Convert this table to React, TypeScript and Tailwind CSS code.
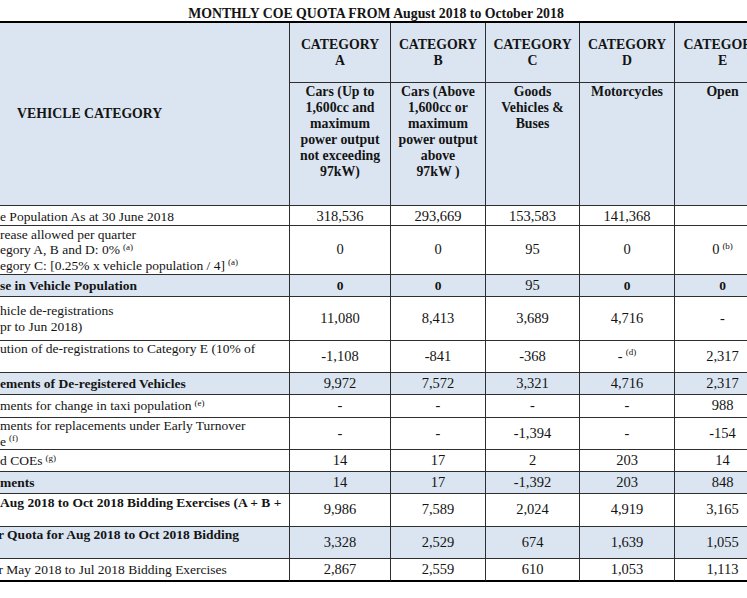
type Val = string | { v: string; sup?: string; b?: boolean }

type Row = {
  h: string
  label: React.ReactNode[]
  values: Val[]
  blue?: boolean
  bold?: boolean
  valueBold?: boolean
  nudge?: string
}

function Sup({ children }: { children: React.ReactNode }) {
  return <sup className="ml-[3px] text-[9px]">{children}</sup>
}

// heights include the 1px bottom rule of each row
const rows: Row[] = [
  {
    h: "h-[20px]",
    label: ["e Population As at 30 June 2018"],
    values: ["318,536", "293,669", "153,583", "141,368", ""],
  },
  {
    h: "h-[49px]",
    label: [
      "rease allowed per quarter",
      <>egory A, B and D: 0%<Sup>(a)</Sup></>,
      <>egory C: [0.25% x vehicle population / 4]<Sup>(a)</Sup></>,
    ],
    values: ["0", "0", "95", "0", { v: "0", sup: "(b)" }],
  },
  {
    h: "h-[22px]",
    label: ["se in Vehicle Population"],
    values: ["0", "0", { v: "95", b: false }, "0", "0"],
    blue: true,
    bold: true,
    valueBold: true,
  },
  {
    h: "h-[44px]",
    label: ["hicle de-registrations", "pr to Jun 2018)"],
    values: ["11,080", "8,413", "3,689", "4,716", "-"],
  },
  {
    h: "h-[32px]",
    label: ["ution of de-registrations to Category E (10% of", "\u00a0"],
    values: ["-1,108", "-841", "-368", { v: "-", sup: "(d)" }, "2,317"],
  },
  {
    h: "h-[22px]",
    label: ["ements of De-registered Vehicles"],
    values: ["9,972", "7,572", "3,321", "4,716", "2,317"],
    blue: true,
    bold: true,
  },
  {
    h: "h-[23px]",
    label: [<>ments for change in taxi population<Sup>(e)</Sup></>],
    values: ["-", "-", "-", "-", "988"],
  },
  {
    h: "h-[32px]",
    label: ["ments for replacements under Early Turnover", <>e<Sup>(f)</Sup></>],
    values: ["-", "-", "-1,394", "-", "-154"],
  },
  {
    h: "h-[22px]",
    label: [<>d COEs<Sup>(g)</Sup></>],
    values: ["14", "17", "2", "203", "14"],
  },
  {
    h: "h-[22px]",
    label: ["ments"],
    values: ["14", "17", "-1,392", "203", "848"],
    blue: true,
    bold: true,
  },
  {
    h: "h-[33px]",
    label: ["Aug 2018 to Oct 2018 Bidding Exercises (A + B +", "\u00a0"],
    values: ["9,986", "7,589", "2,024", "4,919", "3,165"],
    bold: true,
  },
  {
    h: "h-[32px]",
    label: ["r Quota for Aug 2018 to Oct 2018 Bidding", "\u00a0"],
    values: ["3,328", "2,529", "674", "1,639", "1,055"],
    blue: true,
    bold: true,
    nudge: "-ml-[2px]",
  },
  {
    h: "h-[23px] border-b-2 border-b-black",
    label: ["r May 2018 to Jul 2018 Bidding Exercises"],
    values: ["2,867", "2,559", "610", "1,053", "1,113"],
    nudge: "-ml-[1.5px]",
  },
]

const categories = [
  { code: "A", col: "col-start-2", desc: ["Cars (Up to", "1,600cc and", "maximum", "power output", "not exceeding", "97kW)"] },
  { code: "B", col: "col-start-3", desc: ["Cars (Above", "1,600cc or", "maximum", "power output", "above", "97kW )"] },
  { code: "C", col: "col-start-4", desc: ["Goods", "Vehicles &", "Buses"] },
  { code: "D", col: "col-start-5", desc: ["Motorcycles"] },
  { code: "E", col: "col-start-6", desc: ["Open"] },
]

const cols = "grid grid-cols-[290px_101px_95px_94px_95px_96px]"
const rule = "border-[#2e2e2e]"

export default function App() {
  return (
    <div
      className="w-[747px] h-[598px] overflow-hidden bg-white text-[#141414]"
      style={{ fontFamily: '"Liberation Serif", "Times New Roman", serif' }}
    >
      <h1 className="h-[21px] pt-[7px] pl-[5px] text-center text-[13.8px] leading-[14px] font-bold whitespace-nowrap">
        MONTHLY COE QUOTA FROM August 2018 to October 2018
      </h1>

      <div role="table" className="w-[771px] border-t-2 border-black">
        {/* header */}
        <div role="row" className={`${cols} grid-rows-[60px_123px] bg-[#dbe5f1] font-bold text-[13.8px]`}>
          <div
            role="columnheader"
            className={`col-start-1 row-start-1 row-span-2 flex items-center pl-[17px] border-r border-b ${rule}`}
          >
            VEHICLE CATEGORY
          </div>
          {categories.map((c) => (
            <div
              key={c.code}
              role="columnheader"
              className={`${c.col} row-start-1 flex flex-col items-center justify-center leading-[16px] whitespace-nowrap border-r border-b ${rule}`}
            >
              <span>CATEGORY</span>
              <span>{c.code}</span>
            </div>
          ))}
          {categories.map((c) => (
            <div
              key={c.code + "d"}
              className={`${c.col} row-start-2 pt-[1px] text-center leading-[16px] whitespace-nowrap border-r border-b ${rule}`}
            >
              {c.desc.map((line, i) => (
                <div key={i}>{line}</div>
              ))}
            </div>
          ))}
        </div>

        {/* body */}
        {rows.map((r, ri) => (
          <div
            key={ri}
            role="row"
            className={`${cols} ${r.h} border-b ${rule} ${r.blue ? "bg-[#dbe5f1]" : "bg-white"}`}
          >
            <div
              role="rowheader"
              className={`flex flex-col justify-center overflow-hidden text-[13.5px] leading-[15.5px] whitespace-nowrap border-r ${rule} ${
                r.bold ? "font-bold" : ""
              }`}
            >
              <div className={r.nudge ?? ""}>
                {r.label.map((line, i) => (
                  <div key={i}>{line}</div>
                ))}
              </div>
            </div>
            {r.values.map((v, vi) => {
              const val = typeof v === "string" ? { v } : v
              const bold = val.b ?? r.valueBold
              return (
                <div
                  key={vi}
                  role="cell"
                  className={`flex items-center justify-center whitespace-nowrap border-r ${rule} ${
                    bold ? "font-bold text-[13.5px]" : "text-[14.5px]"
                  }`}
                >
                  {val.v}
                  {val.sup && <Sup>{val.sup}</Sup>}
                </div>
              )
            })}
          </div>
        ))}
      </div>
    </div>
  )
}
